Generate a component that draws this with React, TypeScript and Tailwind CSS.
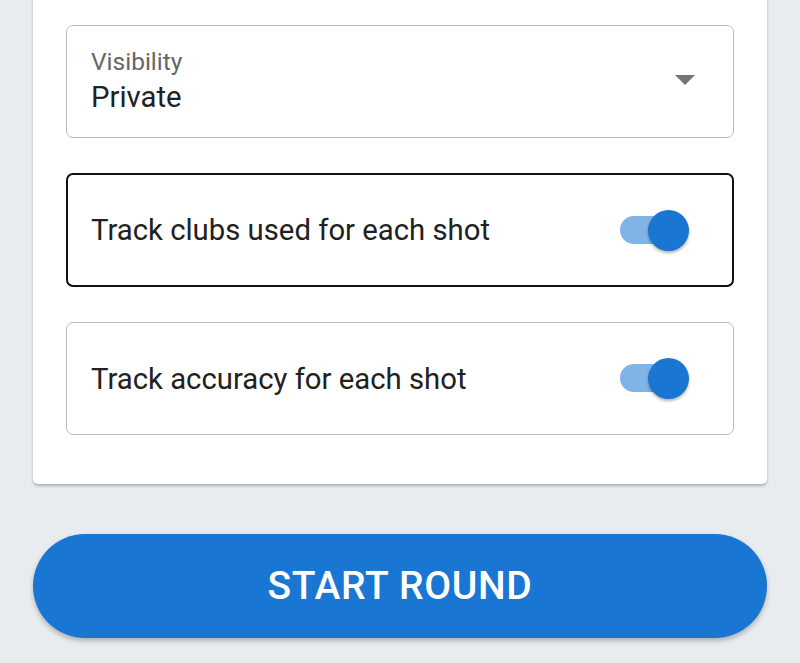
function Switch() {
  return (
    <div className="relative h-[41px] w-[69px] shrink-0">
      <div className="absolute left-0 top-[6px] h-[28px] w-[60px] rounded-full bg-[#1976d2]/55" />
      <div className="absolute right-0 top-0 h-[41px] w-[41px] rounded-full bg-[#1976d2] shadow-[0_2px_3px_rgba(0,0,0,0.3)]" />
    </div>
  );
}

function ToggleRow({ label, focused }: { label: string; focused?: boolean }) {
  return (
    <div
      className={
        focused
          ? "flex h-[114px] items-center justify-between rounded-[7px] border-2 border-[#111] pl-[23px] pr-[43px]"
          : "flex h-[113px] items-center justify-between rounded-[7px] border border-[#bdbdbd] pl-[24px] pr-[44px]"
      }
    >
      <span className="text-[29.3px] leading-[36px] text-[#212121]">{label}</span>
      <Switch />
    </div>
  );
}

export default function App() {
  return (
    <div className="h-[663px] w-[800px] overflow-hidden bg-[#e9ecef] px-[33px] font-['Roboto',sans-serif]">
      <div className="-mt-[8px] flex flex-col gap-[35px] rounded-[5px] bg-white px-[33px] pb-[49px] pt-[33px] shadow-[0_2px_3px_rgba(0,0,0,0.25)]">
        <div className="flex h-[113px] items-center justify-between rounded-[7px] border border-[#bdbdbd] pl-[24px] pr-[38px]">
          <div className="flex flex-col">
            <span className="text-[24.5px] leading-[28px] text-[#666]">Visibility</span>
            <span className="mt-[3px] text-[29.3px] leading-[36px] text-[#212121]">Private</span>
          </div>
          <svg width="20" height="10" viewBox="0 0 20 10" className="mb-[4px]">
            <path d="M0 0h20L10 10z" fill="#757575" />
          </svg>
        </div>
        <ToggleRow label="Track clubs used for each shot" focused />
        <ToggleRow label="Track accuracy for each shot" />
      </div>
      <button className="mt-[50px] flex h-[104px] w-full items-center justify-center rounded-full bg-[#1976d2] text-[39px] font-medium tracking-[0.7px] text-white shadow-[0_3px_5px_rgba(0,0,0,0.25)]">
        START ROUND
      </button>
    </div>
  );
}
